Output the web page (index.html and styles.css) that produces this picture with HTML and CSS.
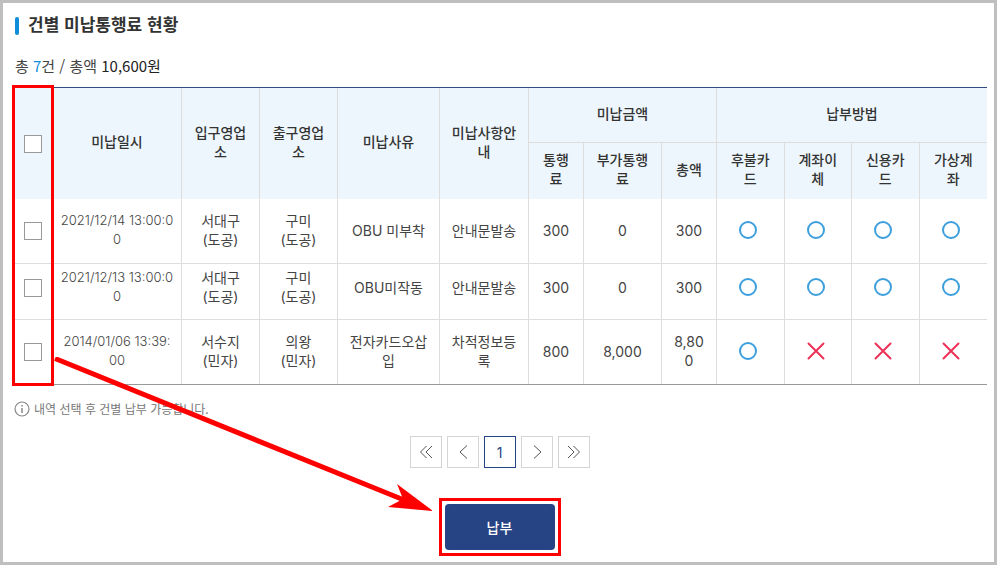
FILE: index.html
```
<!DOCTYPE html>
<html lang="ko">
<head>
  <meta charset="UTF-8">
  <meta name="viewport" content="width=device-width, initial-scale=1.0">
  <title>건별 미납통행료 현황</title>
  <link rel="stylesheet" href="styles.css">
</head>
<body>
  <svg width="0" height="0" class="sprite" aria-hidden="true">
    <symbol id="ico-yes" viewBox="0 0 20 20"><circle cx="10" cy="10" r="8" fill="none" stroke="#3d9fdc" stroke-width="2"/></symbol>
    <symbol id="ico-no" viewBox="0 0 20 20"><path d="M2.5 2.5l15 15M17.5 2.5l-15 15" fill="none" stroke="#ee3158" stroke-width="2" stroke-linecap="round"/></symbol>
  </svg>
  <main class="page">
    <h1 class="title">건별 미납통행료 현황</h1>
    <p class="summary">총 <span class="count">7</span>건 / 총액 <span class="total">10,600원</span></p>

    <div class="table-wrap">
      <table class="toll-table">
        <colgroup>
          <col class="w-check"><col class="w-date"><col class="w-office"><col class="w-office">
          <col class="w-reason"><col class="w-notice"><col class="w-fee"><col class="w-extra"><col class="w-fee">
          <col><col><col><col>
        </colgroup>
        <thead>
          <tr>
            <th rowspan="2" class="check"><input type="checkbox" aria-label="전체 선택"></th>
            <th rowspan="2">미납일시</th>
            <th rowspan="2">입구영업소</th>
            <th rowspan="2">출구영업소</th>
            <th rowspan="2">미납사유</th>
            <th rowspan="2">미납사항안내</th>
            <th colspan="3" class="group">미납금액</th>
            <th colspan="4" class="group">납부방법</th>
          </tr>
          <tr>
            <th>통행료</th>
            <th>부가통행료</th>
            <th>총액</th>
            <th>후불카드</th>
            <th>계좌이체</th>
            <th>신용카드</th>
            <th>가상계좌</th>
          </tr>
        </thead>
        <tbody>
          <tr>
            <td class="check"><input type="checkbox" aria-label="선택"></td>
            <td class="date">2021/12/14 13:00:0<br>0</td>
            <td>서대구<br>(도공)</td>
            <td>구미<br>(도공)</td>
            <td>OBU 미부착</td>
            <td>안내문발송</td>
            <td>300</td>
            <td>0</td>
            <td>300</td>
            <td><svg class="mark"><use href="#ico-yes"/></svg></td>
            <td><svg class="mark"><use href="#ico-yes"/></svg></td>
            <td><svg class="mark"><use href="#ico-yes"/></svg></td>
            <td><svg class="mark"><use href="#ico-yes"/></svg></td>
          </tr>
          <tr class="compact">
            <td class="check"><input type="checkbox" aria-label="선택"></td>
            <td class="date">2021/12/13 13:00:0<br>0</td>
            <td>서대구<br>(도공)</td>
            <td>구미<br>(도공)</td>
            <td>OBU미작동</td>
            <td>안내문발송</td>
            <td>300</td>
            <td>0</td>
            <td>300</td>
            <td><svg class="mark"><use href="#ico-yes"/></svg></td>
            <td><svg class="mark"><use href="#ico-yes"/></svg></td>
            <td><svg class="mark"><use href="#ico-yes"/></svg></td>
            <td><svg class="mark"><use href="#ico-yes"/></svg></td>
          </tr>
          <tr>
            <td class="check"><input type="checkbox" aria-label="선택"></td>
            <td class="date">2014/01/06 13:39:<br>00</td>
            <td>서수지<br>(민자)</td>
            <td>의왕<br>(민자)</td>
            <td>전자카드오삽입</td>
            <td>차적정보등록</td>
            <td>800</td>
            <td>8,000</td>
            <td>8,80<br>0</td>
            <td><svg class="mark"><use href="#ico-yes"/></svg></td>
            <td><svg class="mark"><use href="#ico-no"/></svg></td>
            <td><svg class="mark"><use href="#ico-no"/></svg></td>
            <td><svg class="mark"><use href="#ico-no"/></svg></td>
          </tr>
        </tbody>
      </table>
      <div class="check-frame"></div>
    </div>

    <p class="note">
      <svg class="info" viewBox="0 0 16 16"><circle cx="8" cy="8" r="7" fill="none" stroke="#888" stroke-width="1.2"/><path d="M8 7v5M8 4v1.500" stroke="#888" stroke-width="1.500"/></svg>
      내역 선택 후 건별 납부 가능합니다.
    </p>

    <nav class="pager" aria-label="페이지">
      <button type="button" aria-label="처음"><svg viewBox="0 0 16 16"><path d="M8.500 2l-6 6 6 6M14 2L8 8l6 6"/></svg></button>
      <button type="button" aria-label="이전"><svg viewBox="0 0 16 16"><path d="M12 1.500L5 8l7 6.500"/></svg></button>
      <button type="button" class="current" aria-current="page">1</button>
      <button type="button" aria-label="다음"><svg viewBox="0 0 16 16"><path d="M5 1.500L12 8l-7 6.500"/></svg></button>
      <button type="button" aria-label="마지막"><svg viewBox="0 0 16 16"><path d="M2 2l6 6-6 6M7.500 2l6 6-6 6"/></svg></button>
    </nav>

    <div class="actions">
      <div class="pay-frame"><button type="button" class="pay">납부</button></div>
    </div>

    <!-- guide arrow from the check column to the pay button -->
    <svg class="arrow" width="380" height="156" viewBox="0 0 380 156" aria-hidden="true">
      <path d="M3 1.500L352 143" stroke="#f00" stroke-width="5"/>
      <path d="M345 127L381 154L336 150L351 142Z" fill="#f00"/>
    </svg>
  </main>
</body>
</html>
```

FILE: styles.css
```
:root {
  --navy: #264384;
  --blue: #0e8ddb;
  --red: #f00;
  --head-bg: #edf6fc;
  --line: #ddd;
  --text: #444;
}
* {
  box-sizing: border-box;
}
body {
  margin: 0;
  font-family: Inter, 'Noto Sans CJK KR', sans-serif;
  font-size: 14px;
  line-height: 19px;
  font-weight: 400;
  color: var(--text);
  background: #fff;
}
.sprite {
  position: absolute;
}
.page {
  position: relative;
  min-height: 100vh;
  border: 3px solid #bfbfbf;
  padding: 9px 7px 4px 9px;
}
.title {
  display: flex;
  align-items: flex-end;
  gap: 9px;
  margin: 0 0 0 3px;
  font-family: 'Noto Sans CJK KR', sans-serif;
  font-size: 17px;
  line-height: 23px;
  font-weight: 700;
  color: #333;
}
.title::before {
  content: '';
  width: 4px;
  height: 18px;
  border-radius: 2px;
  background: var(--blue);
}
.summary {
  margin: 19px 0 9px 3px;
  font-family: 'Noto Sans CJK KR', sans-serif;
  font-size: 15px;
  line-height: 24px;
}
.summary .count {
  color: var(--blue);
}
.summary .total {
  color: #222;
}

.table-wrap {
  position: relative;
}
.toll-table {
  width: 100%;
  table-layout: fixed;
  border-collapse: separate;
  border-spacing: 0;
  border-top: 1px solid #334f82;
  border-bottom: 1px solid #999;
  text-align: center;
}
.w-check { width: 41px; }
.w-date { width: 129px; }
.w-office { width: 78px; }
.w-reason { width: 102px; }
.w-notice { width: 89px; }
.w-fee { width: 55px; }
.w-extra { width: 78px; }

.toll-table th,
.toll-table td {
  padding: 11px 11px 13px;
  border-right: 1px solid var(--line);
  border-bottom: 1px solid var(--line);
  word-break: break-all;
  vertical-align: middle;
}
.toll-table th {
  padding: 7px 11px 11px;
  background: var(--head-bg);
  font-family: 'Noto Sans CJK KR', sans-serif;
  font-weight: 500;
  color: #333;
  border-bottom: 0;
}
.toll-table th.group {
  padding: 16px 11px 19px;
  border-bottom: 1px solid var(--line);
}
.toll-table td {
  height: 65px;
}
.toll-table .compact td {
  height: 56px;
  padding-top: 4px;
  padding-bottom: 13px;
}
.toll-table tbody tr:last-child td {
  height: 64px;
  border-bottom: 0;
}
.toll-table td:nth-last-child(-n+4) {
  padding-right: 15px;
}
.toll-table tr th:last-child,
.toll-table tr td:last-child {
  border-right: 0;
}
.toll-table th.check,
.toll-table td.check {
  padding: 0;
  border-right: 0;
}
.toll-table .compact td.check {
  padding-bottom: 7px;
}
.toll-table td.date {
  padding-left: 4px;
  padding-right: 4px;
  font-size: 13px;
  font-weight: 300;
}
.check input {
  appearance: none;
  display: block;
  width: 18px;
  height: 18px;
  margin: 0 auto;
  border: 1px solid #999;
  background: #fff;
}
.check input:checked {
  background: var(--navy);
}
.mark {
  display: block;
  width: 20px;
  height: 20px;
  margin: 0 auto;
}
.check-frame {
  position: absolute;
  top: -2px;
  bottom: -1px;
  left: 0;
  width: 42px;
  border: 3px solid var(--red);
  pointer-events: none;
}

.note {
  display: flex;
  align-items: center;
  gap: 4px;
  margin: 14px 0 18px 2px;
  font-family: 'Noto Sans CJK KR', sans-serif;
  font-size: 12px;
  color: #777;
}
.info {
  width: 16px;
  height: 16px;
}
.pager {
  display: flex;
  justify-content: center;
  gap: 5px;
}
.pager button {
  display: flex;
  align-items: center;
  justify-content: center;
  width: 32px;
  height: 32px;
  padding: 0;
  border: 1px solid #d5d5d5;
  background: #fff;
  font: inherit;
  color: var(--navy);
}
.pager .current {
  border-color: var(--navy);
}
.pager svg {
  width: 16px;
  height: 16px;
  fill: none;
  stroke: #555;
}
.actions {
  display: flex;
  justify-content: center;
  margin-top: 30px;
}
.pay-frame {
  border: 3px solid var(--red);
  padding: 3px;
}
.pay {
  display: block;
  width: 110px;
  height: 46px;
  border: 0;
  border-radius: 4px;
  background: var(--navy);
  color: #fff;
  font-family: 'Noto Sans CJK KR', sans-serif;
  font-size: 14px;
  font-weight: 500;
}
.arrow {
  position: absolute;
  top: 354px;
  left: 49px;
  pointer-events: none;
}
```
